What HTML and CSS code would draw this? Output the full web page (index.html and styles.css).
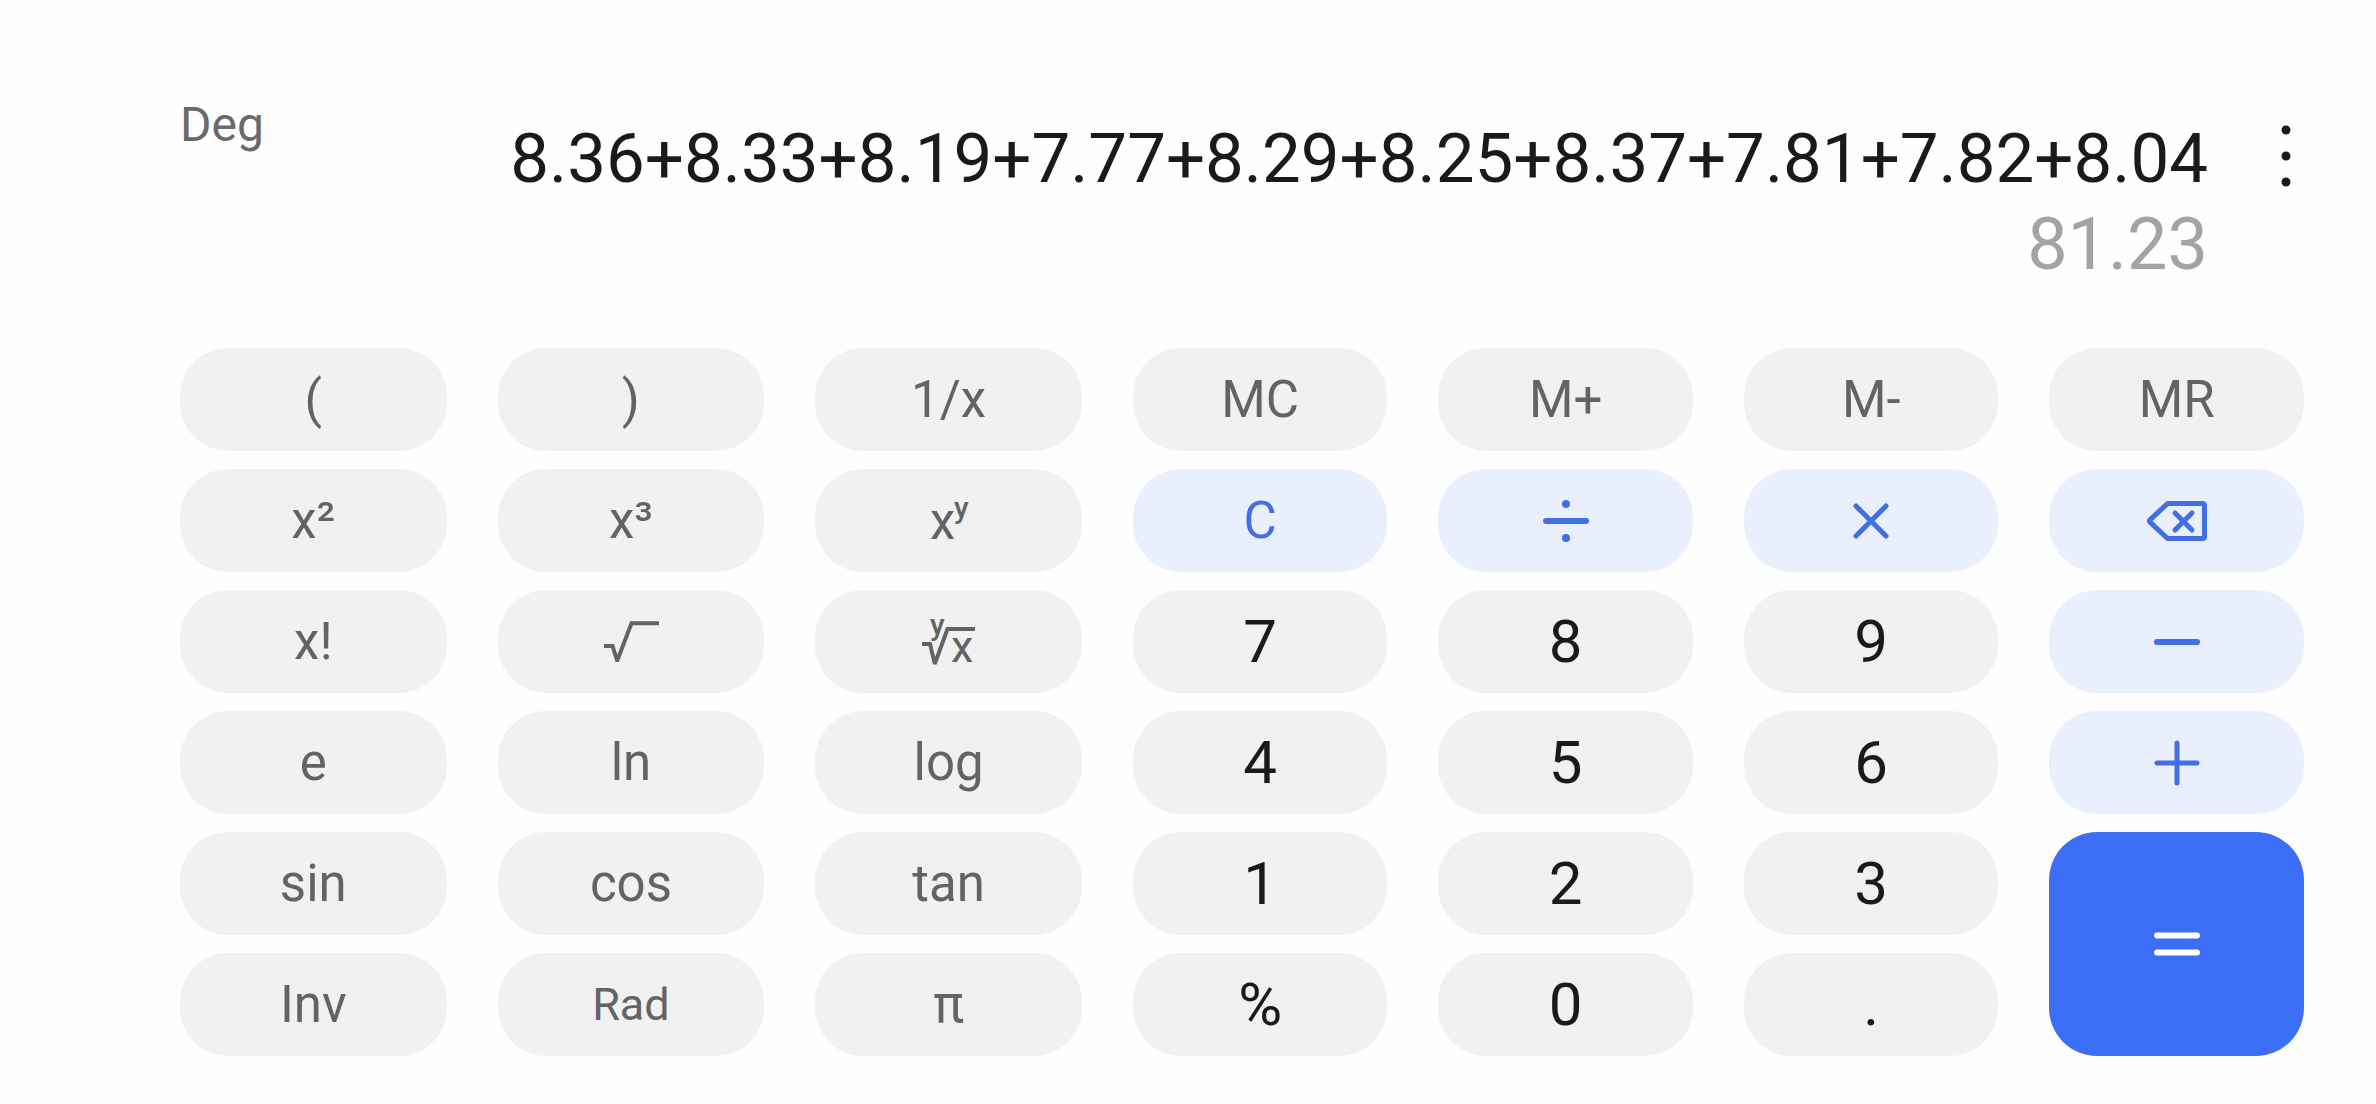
FILE: index.html
```html
<!DOCTYPE html>
<html lang="en">
<head>
  <meta charset="UTF-8">
  <meta name="viewport" content="width=device-width, initial-scale=1.0">
  <title>Calculator</title>
  <link rel="stylesheet" href="styles.css">
</head>
<body>
  <main class="calculator">
    <header class="display">
      <span class="mode">Deg</span>
      <div class="readout">
        <div class="expression">8.36+8.33+8.19+7.77+8.29+8.25+8.37+7.81+7.82+8.04</div>
        <output class="result">81.23</output>
      </div>
      <button class="menu" aria-label="More options">
        <svg width="10" height="62" viewBox="0 0 10 62">
          <circle cx="5" cy="5" r="4.5"/>
          <circle cx="5" cy="31" r="4.5"/>
          <circle cx="5" cy="57" r="4.5"/>
        </svg>
      </button>
    </header>

    <div class="keypad">
      <button class="key">(</button>
      <button class="key">)</button>
      <button class="key">1/x</button>
      <button class="key">MC</button>
      <button class="key">M+</button>
      <button class="key">M-</button>
      <button class="key">MR</button>

      <button class="key">x²</button>
      <button class="key">x³</button>
      <button class="key" aria-label="x to the power y">
        <svg width="52" height="76" viewBox="-4 -10 52 76">
          <text class="base" x="3" y="46">x</text>
          <text class="power" x="27" y="25">y</text>
        </svg>
      </button>
      <button class="key operator">C</button>
      <button class="key operator" aria-label="Divide">
        <svg width="48" height="48" viewBox="0 0 48 48">
          <path class="line" d="M4 24h40"/>
          <rect class="dot" x="20" y="3" width="8" height="8" rx="4"/>
          <rect class="dot" x="20" y="37" width="8" height="8" rx="4"/>
        </svg>
      </button>
      <button class="key operator" aria-label="Multiply">
        <svg width="48" height="48" viewBox="0 0 48 48">
          <path class="line thin" d="M9 9l30 30M39 9L9 39"/>
        </svg>
      </button>
      <button class="key operator" aria-label="Backspace">
        <svg width="60" height="40" viewBox="0 0 60 40">
          <path class="line thin" d="M20.5 2.5H56a1.5 1.5 0 0 1 1.5 1.5V36a1.5 1.5 0 0 1-1.5 1.5H20.500L3 21.200Q2 20 3 18.800Z"/>
          <path class="line thin" d="M28 12l17 17M45 12L28 29"/>
        </svg>
      </button>

      <button class="key">x!</button>
      <button class="key" aria-label="Square root">
        <svg width="56" height="42" viewBox="0 0 56 42">
          <path class="root" d="M1 25h8.500l4.500 14h.5L28.500 2.300H56"/>
        </svg>
      </button>
      <button class="key" aria-label="y-th root of x">
        <svg width="56" height="80" viewBox="0 -16 56 80">
          <text class="power" x="9" y="17">y</text>
          <path class="root" d="M1 26h8l4.500 18.500h.8L26.500 11H54"/>
          <text class="radicand" x="30" y="44">x</text>
        </svg>
      </button>
      <button class="key digit">7</button>
      <button class="key digit">8</button>
      <button class="key digit">9</button>
      <button class="key operator" aria-label="Subtract">
        <svg width="48" height="48" viewBox="0 0 48 48">
          <path class="line" d="M4 24h40"/>
        </svg>
      </button>

      <button class="key">e</button>
      <button class="key">ln</button>
      <button class="key">log</button>
      <button class="key digit">4</button>
      <button class="key digit">5</button>
      <button class="key digit">6</button>
      <button class="key operator" aria-label="Add">
        <svg width="48" height="48" viewBox="0 0 48 48">
          <path class="line thin" d="M4 24h40M24 4v40"/>
        </svg>
      </button>

      <button class="key">sin</button>
      <button class="key">cos</button>
      <button class="key">tan</button>
      <button class="key digit">1</button>
      <button class="key digit">2</button>
      <button class="key digit">3</button>
      <button class="key equals" aria-label="Equals">
        <svg width="48" height="48" viewBox="0 0 48 48">
          <path class="line" d="M4 15.500h40M4 32.500h40"/>
        </svg>
      </button>

      <button class="key">Inv</button>
      <button class="key small">Rad</button>
      <button class="key">π</button>
      <button class="key digit">%</button>
      <button class="key digit">0</button>
      <button class="key digit">.</button>
    </div>
  </main>
</body>
</html>
```
FILE: styles.css
```css
* {
  box-sizing: border-box;
}

body {
  margin: 0;
  background-color: #fefefe;
  font-family: Roboto, sans-serif;
  color: #1a1a1a;
}

.calculator {
  padding: 96px 72px 48px 180px;
}

.display {
  display: flex;
  align-items: flex-start;
  margin-bottom: 60px;
}

.mode {
  font-size: 48px;
  line-height: 58px;
  color: #6a6a6a;
}

.readout {
  flex: 1;
  margin-top: 20px;
  text-align: right;
  line-height: 86px;
}

.expression {
  font-size: 69px;
}

.result {
  display: block;
  font-size: 72px;
  color: #a3a3a3;
}

button {
  border: none;
  padding: 0;
  font-family: inherit;
  cursor: pointer;
}

.menu {
  display: flex;
  align-items: center;
  justify-content: center;
  width: 36px;
  height: 80px;
  margin: 20px 0 0 60px;
  background: none;
  color: #1a1a1a;
}

.menu svg {
  fill: currentColor;
}

.keypad {
  display: grid;
  grid-template-columns: repeat(3, 22fr) repeat(4, 21fr);
  grid-auto-rows: 103px;
  gap: 18px 51px;
}

.key {
  display: flex;
  align-items: center;
  justify-content: center;
  border-radius: 48px;
  background-color: #f1f1f1;
  color: #636363;
  font-size: 51px;
}

.key:active {
  filter: brightness(0.94);
}

.digit {
  color: #1a1a1a;
  font-size: 60px;
}

.small {
  font-size: 45px;
}

.operator {
  background-color: #e9effd;
  color: #426ee6;
}

.equals {
  grid-row: span 2;
  background-color: #3b6df6;
  color: #fff;
}

.line {
  fill: none;
  stroke: currentColor;
  stroke-width: 6;
  stroke-linecap: round;
  stroke-linejoin: round;
}

.thin {
  stroke-width: 5;
}

.dot {
  fill: currentColor;
}

.root {
  fill: none;
  stroke: currentColor;
  stroke-width: 4;
}

.base {
  fill: currentColor;
  font-size: 51px;
}

.radicand {
  fill: currentColor;
  font-size: 45px;
}

.power {
  fill: currentColor;
  font-size: 30px;
  font-weight: 500;
}
```
